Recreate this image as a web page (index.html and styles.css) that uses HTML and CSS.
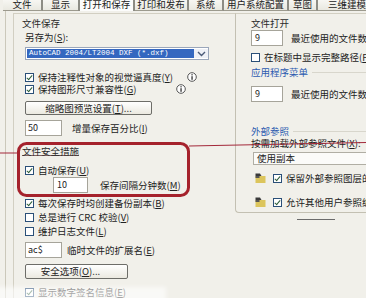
FILE: index.html
```html
<!DOCTYPE html>
<html lang="zh-CN">
<head>
<meta charset="utf-8">
<title>选项 - 打开和保存</title>
<link rel="stylesheet" href="styles.css">
</head>
<body>
<div class="dialog">
  <div class="tabs">
    <div class="tab">文件</div>
    <div class="tab">显示</div>
    <div class="tab active">打开和保存</div>
    <div class="tab">打印和发布</div>
    <div class="tab">系统</div>
    <div class="tab">用户系统配置</div>
    <div class="tab">草图</div>
    <div class="tab">三维建模</div>
  </div>

  <div class="page">
    <div class="col-left">
      <div class="title">文件保存</div>
      <div class="row m2">另存为(<u>S</u>):</div>
      <div class="combo m4">
        <span class="combo-text">AutoCAD 2004/LT2004 DXF (*.dxf)</span>
        <span class="combo-btn"><svg width="9" height="6" viewBox="0 0 9 6"><path d="M1 1 L4.5 4.5 L8 1" fill="none" stroke="#4a5a78" stroke-width="1.4"/></svg></span>
      </div>
      <div class="row m11"><span class="chk on"></span>保持注释性对象的视觉逼真度(<u>Y</u>)<span class="info info-a"><svg width="10" height="10" viewBox="0 0 10 10"><circle cx="5" cy="5" r="4.3" fill="#fff" stroke="#555" stroke-width="1"/><rect x="4.4" y="4.2" width="1.3" height="3.6" fill="#333"/><rect x="4.4" y="2.2" width="1.3" height="1.2" fill="#333"/></svg></span></div>
      <div class="row"><span class="chk on"></span>保持图形尺寸兼容性(<u>G</u>)<span class="info info-b"><svg width="10" height="10" viewBox="0 0 10 10"><circle cx="5" cy="5" r="4.3" fill="#fff" stroke="#555" stroke-width="1"/><rect x="4.4" y="4.2" width="1.3" height="3.6" fill="#333"/><rect x="4.4" y="2.2" width="1.3" height="1.2" fill="#333"/></svg></span></div>
      <div class="btn btn-thumb m6">缩略图预览设置(<u>T</u>)...</div>
      <div class="row field-row m5"><span class="input">50</span><span class="gap10">增量保存百分比(<u>I</u>)</span></div>

      <div class="title title-sec m10">文件安全措施</div>
      <div class="row m6"><span class="chk on"></span>自动保存(<u>U</u>)</div>
      <div class="row field-row m1 ind28"><span class="input input-s">10</span><span class="gap12">保存间隔分钟数(<u>M</u>)</span></div>
      <div class="row m4"><span class="chk on"></span>每次保存时均创建备份副本(<u>B</u>)</div>
      <div class="row m2"><span class="chk"></span>总是进行 CRC 校验(<u>V</u>)</div>
      <div class="row m2"><span class="chk"></span>维护日志文件(<u>L</u>)</div>
      <div class="row field-row m5"><span class="input">ac$</span><span class="gap5">临时文件的扩展名(<u>E</u>)</span></div>
      <div class="btn btn-sec m6">安全选项(<u>O</u>)...</div>
      <div class="row m7"><span class="chk on"></span>显示数字签名信息(<u>E</u>)</div>
    </div>

    <div class="col-right">
      <div class="group-right">
        <div class="title">文件打开</div>
        <div class="row field-row m1"><span class="input input-n">9</span><span class="gap8">最近使用的文件数</span></div>
        <div class="row m5"><span class="chk"></span>在标题中显示完整路径(<u>F</u>)</div>
        <div class="title title-blue m3">应用程序菜单</div>
        <div class="row field-row m8"><span class="input input-n">9</span><span class="gap8">最近使用的文件数</span></div>
        <div class="title title-blue m23">外部参照</div>
        <div class="row">按需加载外部参照文件(<u>X</u>):</div>
        <div class="select m3">使用副本</div>
        <div class="row icon-row m7"><svg class="xicon" width="11" height="10" viewBox="0 0 11 10"><rect x="0.5" y="3" width="10" height="7" fill="#dcc55c"/><path d="M0.5 0.5 H5 L6.5 3 H0.5 Z" fill="#3a3a3a"/><rect x="0.5" y="3" width="4" height="2" fill="#555"/></svg><span class="chk on"></span>保留外部参照图层的修改(<u>Y</u>)</div>
        <div class="row icon-row m12"><svg class="xicon" width="11" height="10" viewBox="0 0 11 10"><rect x="0.5" y="3" width="10" height="7" fill="#dcc55c"/><path d="M0.5 0.5 H5 L6.5 3 H0.5 Z" fill="#3a3a3a"/><rect x="0.5" y="3" width="4" height="2" fill="#555"/></svg><span class="chk on"></span>允许其他用户参照编辑当前图形(<u>O</u>)</div>
      </div>
      <div class="dash"></div>
    </div>
  </div>

  <div class="fade"></div>

  <svg class="annot" width="366" height="298" viewBox="0 0 366 298">
    <line x1="0" y1="153" x2="18" y2="153" stroke="#a3283a" stroke-width="1"/>
    <line x1="189" y1="146" x2="366" y2="142.5" stroke="#a3283a" stroke-width="1"/>
    <rect x="18.5" y="143.5" width="170" height="52" rx="8" ry="8" fill="none" stroke="#a5222c" stroke-width="3"/>
  </svg>
</div>
</body>
</html>
```

FILE: styles.css
```css
* { box-sizing: border-box; }

html, body {
  margin: 0;
  padding: 0;
  background: #f1f0ea;
}

.dialog {
  position: relative;
  width: 366px;
  height: 298px;
  overflow: hidden;
  background: #f1f0ea;
  font-family: "Noto Sans CJK SC", "Noto Sans", sans-serif;
  font-size: 9.5px;
  color: #222;
}

u { text-decoration: underline; }

/* tabs */
.tabs {
  display: grid;
  grid-template-columns: 40px 37px 55px 54px 35px 65px 29px 60px;
  margin-top: -3px;
  margin-left: 3px;
  height: 14px;
}

.tab {
  height: 14px;
  line-height: 14px;
  text-align: center;
  white-space: nowrap;
  background: linear-gradient(#fbfbf8, #e9e8e0);
  border-right: 2px solid #8d8c84;
  border-bottom: 1px solid #9c9a8e;
  color: #1c1c1c;
}

.tab.active {
  background: #fcfcfb;
  border-left: 2px solid #8d8c84;
  margin-left: -2px;
  border-bottom: none;
}

/* page */
.page {
  display: grid;
  grid-template-columns: 229px 1fr;
  margin-left: 5px;
  border-left: 1px solid #cbc8ba;
  padding-top: 2px;
  height: 300px;
}

.col-left {
  margin-left: 7px;
  border-left: 1px solid #d2cfc2;
  border-top: 1px solid #d2cfc2;
  padding: 3px 0 0 11px;
  display: flex;
  flex-direction: column;
  align-items: flex-start;
}

.col-right {
  display: flex;
  flex-direction: column;
}

.group-right {
  border-left: 1px solid #c3c0b2;
  border-top: 1px solid #d2cfc2;
  border-bottom: 1px solid #c3c0b2;
  border-bottom-left-radius: 4px;
  padding: 3px 0 4px 15px;
  display: flex;
  flex-direction: column;
  align-items: flex-start;
}

.title {
  height: 12px;
  line-height: 12px;
  margin-left: -3px;
  color: #2a2a2a;
}

.group-right .title { margin-left: 0; }

.title-sec {
  border-bottom: 1px solid #7d6161;
  height: 10px;
  line-height: 10px;
  margin-top: 11px;
  margin-bottom: 2px;
}

.title-blue {
  color: #2d5bb0;
  align-self: stretch;
  display: flex;
  align-items: center;
  gap: 4px;
}

.title-blue::after {
  content: "";
  flex: 1;
  height: 1px;
  background: #d8d6cc;
}

.row {
  height: 12px;
  line-height: 12px;
  display: flex;
  align-items: center;
  white-space: nowrap;
}

.field-row { height: 16px; }

.m1 { margin-top: 1px; }
.m2 { margin-top: 2px; }
.m3 { margin-top: 3px; }
.m4 { margin-top: 4px; }
.m5 { margin-top: 5px; }
.m6 { margin-top: 6px; }
.m7 { margin-top: 7px; }
.m8 { margin-top: 8px; }
.m10 { margin-top: 10px; }
.m11 { margin-top: 11px; }
.m12 { margin-top: 12px; }
.m23 { margin-top: 23px; }
.ind28 { margin-left: 28px; }

.gap5 { margin-left: 5px; }
.gap8 { margin-left: 8px; }
.gap10 { margin-left: 10px; }
.gap12 { margin-left: 12px; }

/* checkbox */
.chk {
  position: relative;
  width: 9px;
  height: 9px;
  border: 1px solid #2a4f78;
  background: #fff;
  margin-right: 4px;
  flex: none;
}

.chk.on::after {
  content: "";
  position: absolute;
  left: 2px;
  top: 0px;
  width: 2px;
  height: 5px;
  border: solid #2d5e3a;
  border-width: 0 1.5px 1.5px 0;
  transform: rotate(40deg);
}

.info { display: inline-flex; }
.info-a { margin-left: 14px; }
.info-b { margin-left: 40px; }

/* combo */
.combo {
  display: flex;
  width: 184px;
  height: 13px;
  border: 1px solid #9aa6ba;
  background: #fff;
  padding: 1px 0 1px 1px;
}

.combo-text {
  flex: 1;
  background: #3467c0;
  color: #fff;
  font-family: "Liberation Mono", monospace;
  font-size: 7.5px;
  line-height: 9px;
  padding-left: 2px;
  white-space: nowrap;
  overflow: hidden;
}

.combo-btn {
  width: 14px;
  display: flex;
  align-items: center;
  justify-content: center;
  background: #eef0f6;
}

/* buttons */
.btn {
  height: 14px;
  line-height: 12px;
  text-align: center;
  border: 1px solid #6d6d68;
  border-radius: 2px;
  background: linear-gradient(#ffffff, #ebe9e0);
  white-space: nowrap;
}

.btn-thumb { width: 127px; }
.btn-sec { width: 103px; height: 15px; line-height: 13px; padding-right: 12px; }

/* inputs */
.input {
  width: 37px;
  height: 16px;
  line-height: 14px;
  border: 1px solid #a6a49a;
  background: #fff;
  padding-left: 2px;
  font-size: 9px;
}

.input-s { width: 35px; padding-left: 3px; }
.input-n { width: 32px; padding-left: 3px; }

.select {
  width: 140px;
  height: 13px;
  line-height: 11px;
  border: 1px solid #b0aea4;
  background: #fbfbf9;
  padding-left: 3px;
  margin-left: 2px;
}

.icon-row { height: 12px; }
.xicon { margin-left: 4px; margin-right: 7px; flex: none; }

.dash {
  margin-top: 6px;
  margin-left: 62px;
  width: 38px;
  height: 1px;
  background: #6b6b6b;
}

/* overlays */
.fade {
  position: absolute;
  left: -4px;
  top: 287px;
  width: 170px;
  height: 16px;
  background: rgba(255, 255, 255, 0.6);
  filter: blur(2px);
}

.annot {
  position: absolute;
  left: 0;
  top: 0;
  pointer-events: none;
}
```
